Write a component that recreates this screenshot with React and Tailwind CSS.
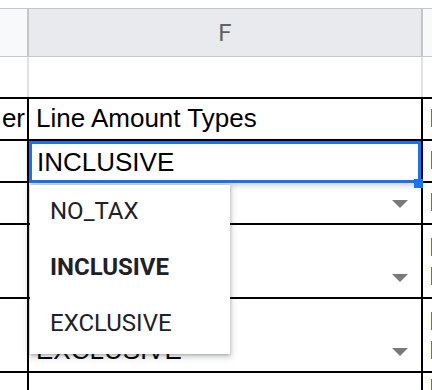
import React from "react"

const cellFont = { fontFamily: '"Liberation Sans", Arial, sans-serif' }
const uiFont = { fontFamily: 'Roboto, "Liberation Sans", sans-serif' }

function Arrow() {
  return (
    <svg width="16" height="8" viewBox="0 0 16 8" className="absolute right-[13px] bottom-[15px]">
      <polygon points="0,0 16,0 8,8" fill="#7a7a7a" />
    </svg>
  )
}

function DataRow({ h, left, mid, right, arrow, rightTop }) {
  return (
    <div className={`flex ${h} border-t-2 border-black text-black text-[26px] leading-[29px]`} style={cellFont}>
      <div className="w-[27px] overflow-hidden flex items-end justify-end pb-[6px] pr-[2px] whitespace-nowrap">
        {left}
      </div>
      <div className="w-[396px] border-x-2 border-black relative flex items-end pb-[6px] pl-[7px] whitespace-nowrap overflow-hidden">
        {mid}
        {arrow && <Arrow />}
      </div>
      <div
        className={`flex-1 overflow-hidden flex flex-col ${rightTop ? "justify-start pt-[1px]" : "justify-end pb-[6px]"} pl-[6px] whitespace-nowrap`}
      >
        {right}
      </div>
    </div>
  )
}

export default function App() {
  return (
    <div className="relative w-[432px] h-[390px] overflow-hidden bg-white">
      <div className="h-[8px]" />

      {/* column header */}
      <div className="flex h-[49px] border-y border-[#c4c7c5]" style={uiFont}>
        <div className="w-[27px] bg-[#f8f9fa]" />
        <div className="w-[396px] border-x-2 border-[#c4c7c5] bg-[#e8eaed] flex items-center justify-center text-[24px] text-[#5f6368]">
          F
        </div>
        <div className="flex-1 bg-[#f8f9fa]" />
      </div>

      {/* frozen blank row */}
      <div className="flex h-[40px]">
        <div className="w-[27px]" />
        <div className="w-[396px] border-x-2 border-[#e2e2e2]" />
        <div className="flex-1" />
      </div>

      <DataRow h="h-[42px]" left="er" mid="Line Amount Types" right="Item" />
      <DataRow h="h-[42px]" mid="" right="Item" />
      <DataRow h="h-[42px]" mid="NO_TAX" right="Item" arrow />
      <DataRow
        h="h-[74px]"
        mid="INCLUSIVE"
        right={
          <>
            <span>Item</span>
            <span>Item</span>
          </>
        }
        arrow
      />
      <DataRow
        h="h-[74px]"
        mid="EXCLUSIVE"
        right={
          <>
            <span>Item</span>
            <span>Item</span>
          </>
        }
        arrow
      />
      <DataRow h="h-[42px]" mid="" right="Item" rightTop />

      {/* active cell editor */}
      <div
        className="absolute left-[29px] top-[141px] w-[392px] h-[42px] border-[3px] border-[#1a73e8] bg-white flex items-end pb-[3px] pl-[5px] text-[26px] leading-[29px] text-black shadow-[0_2px_6px_rgba(0,0,0,0.22)]"
        style={cellFont}
      >
        INCLUSIVE
      </div>
      <div className="absolute left-[414px] top-[179px] w-[9px] h-[9px] bg-[#1a73e8]" />

      {/* dropdown */}
      <div
        className="absolute left-[30px] top-[185px] w-[200px] h-[169px] bg-white flex flex-col gap-[28px] pt-[12px] shadow-[0_2px_6px_2px_rgba(60,64,67,0.18),0_1px_3px_rgba(60,64,67,0.35)]"
        style={uiFont}
      >
        {[
          { label: "NO_TAX", bold: false },
          { label: "INCLUSIVE", bold: true },
          { label: "EXCLUSIVE", bold: false },
        ].map((it) => (
          <div
            key={it.label}
            className={`h-[28px] shrink-0 pl-[20px] text-[24px] leading-[28px] text-[#202124] ${it.bold ? "font-bold" : ""}`}
          >
            {it.label}
          </div>
        ))}
      </div>
    </div>
  )
}
